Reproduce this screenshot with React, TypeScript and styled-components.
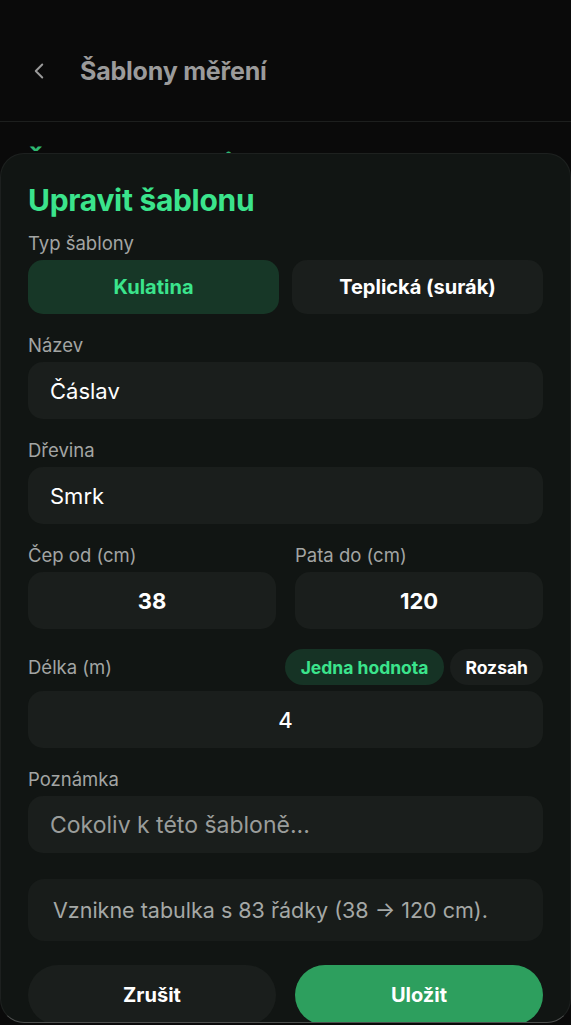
import styled, { createGlobalStyle } from 'styled-components'
import { ChevronLeft } from 'lucide-react'

const GlobalStyle = createGlobalStyle`
  html, body {
    margin: 0;
    padding: 0;
    background: #0a0a0a;
    font-family: Inter, 'Noto Sans', 'Liberation Sans', sans-serif;
    color: #fff;
  }
  * { box-sizing: border-box; }
`

function App() {
  return (
    <Page>
      <GlobalStyle />
      <Header>
        <BackBtn aria-label='zpět'>
          <ChevronLeft size={26} strokeWidth={1.8} />
        </BackBtn>
        <HeaderTitle>Šablony měření</HeaderTitle>
      </Header>
      <Behind>Šablony kulatiny</Behind>

      <Sheet>
        <SheetTitle>Upravit šablonu</SheetTitle>
        <Form>
          <Field>
            <Label>Typ šablony</Label>
            <TwoCols $gap={13}>
              <Segment $active>Kulatina</Segment>
              <Segment>Teplická (surák)</Segment>
            </TwoCols>
          </Field>

          <Field>
            <Label>Název</Label>
            <Input>Čáslav</Input>
          </Field>

          <Field>
            <Label>Dřevina</Label>
            <Input>Smrk</Input>
          </Field>

          <TwoCols $gap={19}>
            <Field>
              <Label>Čep od (cm)</Label>
              <Input $center $bold>38</Input>
            </Field>
            <Field>
              <Label>Pata do (cm)</Label>
              <Input $center $bold>120</Input>
            </Field>
          </TwoCols>

          <Field>
            <LabelRow>
              <Label>Délka (m)</Label>
              <Pills>
                <Pill $active>Jedna hodnota</Pill>
                <Pill>Rozsah</Pill>
              </Pills>
            </LabelRow>
            <Input $center $medium>4</Input>
          </Field>

          <Field>
            <Label>Poznámka</Label>
            <Input $placeholder>Cokoliv k této šabloně...</Input>
          </Field>
        </Form>

        <Info>Vznikne tabulka s 83 řádky (38 → 120 cm).</Info>

        <TwoCols $gap={19}>
          <Action>Zrušit</Action>
          <Action $primary>Uložit</Action>
        </TwoCols>
      </Sheet>
    </Page>
  )
}

const Page = styled.div`
  position: relative;
  width: 100%;
  height: 1025px;
  overflow: hidden;
  background: #0a0a0a;
`
const Header = styled.div`
  height: 122px;
  display: flex;
  align-items: center;
  gap: 28px;
  padding: 20px 0 0 26px;
  border-bottom: 1px solid #1d1f1e;
`
const BackBtn = styled.button`
  display: flex;
  align-items: center;
  background: none;
  border: none;
  padding: 0;
  color: #9a9a9a;
`
const HeaderTitle = styled.div`
  font-size: 25px;
  font-weight: 700;
  color: #9b9b9b;
  letter-spacing: -0.2px;
`
const Behind = styled.div`
  padding: 24px 26px 0;
  font-size: 30px;
  font-weight: 700;
  color: #2fb872;
`
const Sheet = styled.div`
  position: absolute;
  top: 153px;
  left: 0;
  right: 0;
  height: 870px;
  overflow: hidden;
  background: #111513;
  border-radius: 24px;
  border: 1px solid rgba(255, 255, 255, 0.05);
  border-bottom: 1px solid #4c4e4d;
  padding: 29px 27px 0;
`
const SheetTitle = styled.h2`
  margin: 0 0 15px;
  font-size: 30px;
  line-height: 34px;
  font-weight: 700;
  color: #3be48c;
  letter-spacing: -0.3px;
`
const Form = styled.div`
  display: flex;
  flex-direction: column;
  gap: 20px;
`
const Field = styled.div`
  display: flex;
  flex-direction: column;
  gap: 6px;
  min-width: 0;
`
const Label = styled.div`
  font-size: 18.5px;
  line-height: 22px;
  color: #a3a5a4;
`
const LabelRow = styled.div`
  display: flex;
  align-items: center;
  justify-content: space-between;
  height: 36px;
`
const TwoCols = styled.div<{ $gap: number }>`
  display: grid;
  grid-template-columns: 1fr 1fr;
  gap: ${({ $gap }) => $gap}px;
`
const Segment = styled.button<{ $active?: boolean }>`
  height: 54px;
  border: none;
  border-radius: 15px;
  font-family: inherit;
  font-size: 20px;
  font-weight: 700;
  background: ${({ $active }) => ($active ? '#173727' : '#1a1e1c')};
  color: ${({ $active }) => ($active ? '#3be48c' : '#ffffff')};
`
const Input = styled.div<{ $center?: boolean; $bold?: boolean; $medium?: boolean; $placeholder?: boolean }>`
  height: 57px;
  display: flex;
  align-items: center;
  justify-content: ${({ $center }) => ($center ? 'center' : 'flex-start')};
  padding: 0 22px;
  border-radius: 15px;
  background: #1a1e1c;
  font-size: ${({ $placeholder }) => ($placeholder ? 23 : 22)}px;
  font-weight: ${({ $bold, $medium }) => ($bold ? 700 : $medium ? 500 : 400)};
  color: ${({ $placeholder }) => ($placeholder ? '#9a9d9b' : '#ffffff')};
`
const Pills = styled.div`
  display: flex;
  gap: 6px;
`
const Pill = styled.button<{ $active?: boolean }>`
  height: 36px;
  padding: 0 ${({ $active }) => ($active ? 16 : 15)}px;
  border: none;
  border-radius: 18px;
  font-family: inherit;
  font-size: 17.5px;
  font-weight: 700;
  background: ${({ $active }) => ($active ? '#163325' : '#1a1e1c')};
  color: ${({ $active }) => ($active ? '#3be48c' : '#ffffff')};
`
const Info = styled.div`
  margin: 26px 0 24px;
  height: 62px;
  display: flex;
  align-items: center;
  padding: 0 25px;
  border-radius: 16px;
  background: #181c1a;
  font-size: 21.5px;
  color: #a5a8a6;
`
const Action = styled.button<{ $primary?: boolean }>`
  height: 60px;
  border: none;
  border-radius: 30px;
  font-family: inherit;
  font-size: 20px;
  font-weight: 700;
  background: ${({ $primary }) => ($primary ? '#2d9f5e' : '#1a1e1c')};
  color: #ffffff;
`

export default App
